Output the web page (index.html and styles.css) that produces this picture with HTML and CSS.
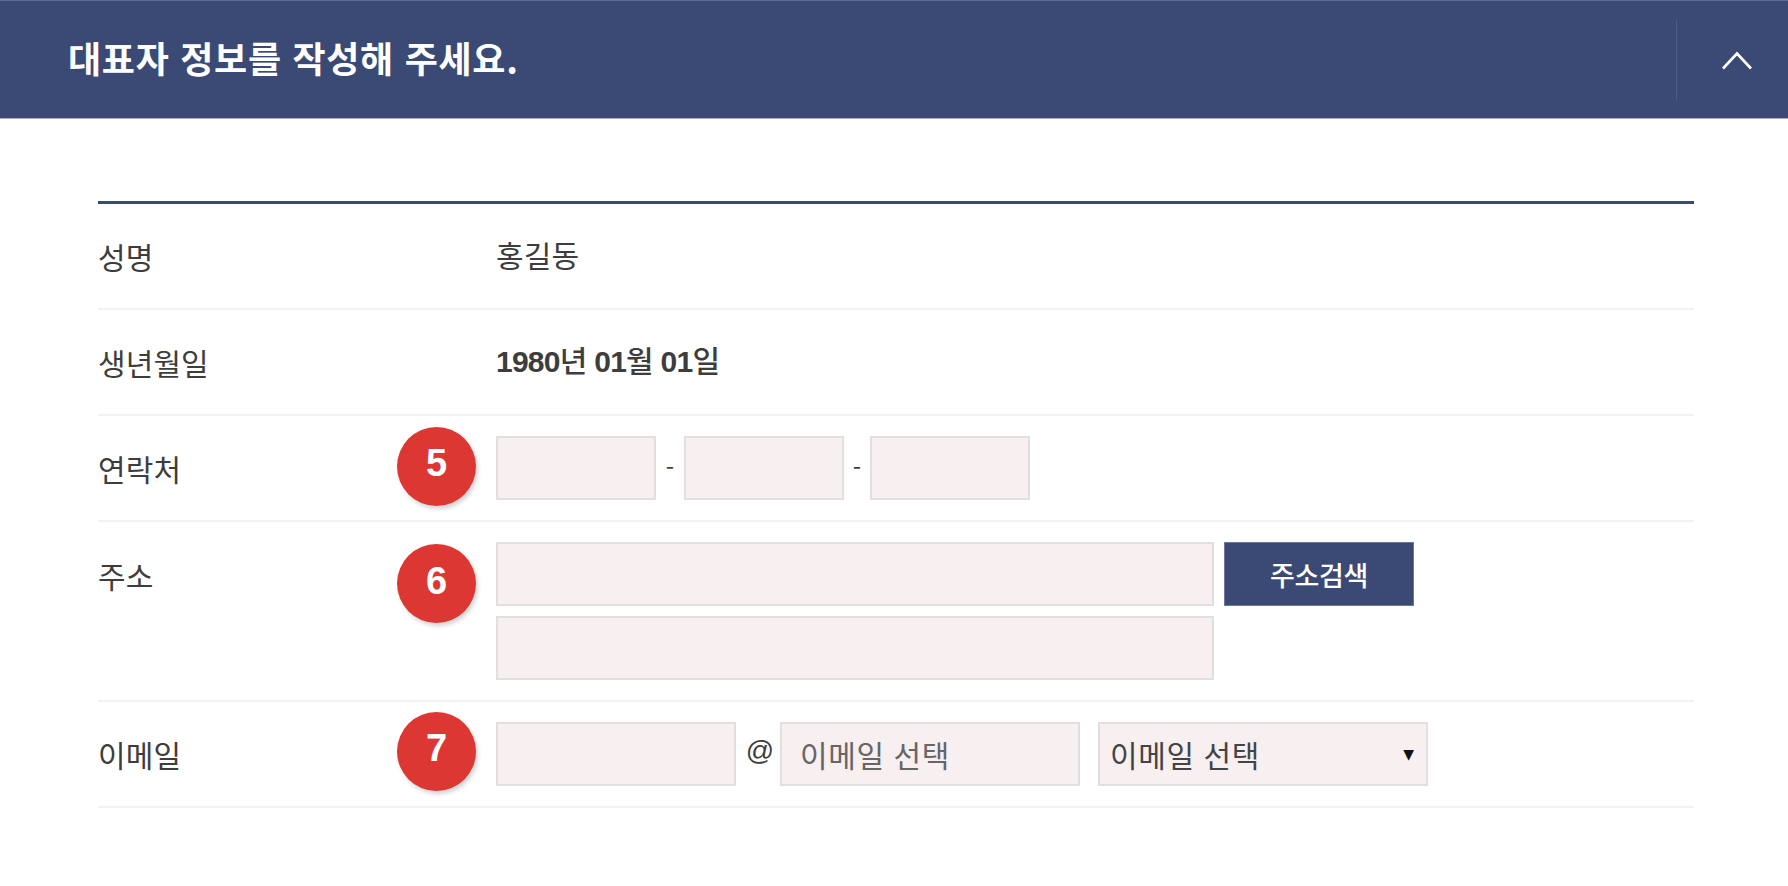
FILE: index.html
```html
<!DOCTYPE html>
<html lang="ko">
<head>
<meta charset="utf-8">
<title>대표자 정보</title>
<link rel="stylesheet" href="styles.css">
</head>
<body>
<header class="head">
  <h1 class="head-title">대표자 정보를 작성해 주세요.</h1>
  <button class="head-toggle" type="button" aria-label="접기">
    <svg class="chevron" width="30" height="20" viewBox="0 0 30 20"><path d="M1 18.5 L15 3.5 L29 18.5" fill="none" stroke="#fff" stroke-width="2.6"/></svg>
  </button>
</header>
<main class="panel">
  <div class="table">
    <div class="row">
      <div class="label">성명</div>
      <div class="slot"></div>
      <div class="value name">홍길동</div>
    </div>
    <div class="row">
      <div class="label">생년월일</div>
      <div class="slot"></div>
      <div class="value birth">1980<span class="unit">년</span> 01<span class="unit">월</span> 01<span class="unit">일</span></div>
    </div>
    <div class="row form">
      <div class="label">연락처</div>
      <div class="slot"><span class="badge">5</span></div>
      <div class="field">
        <div class="line">
          <input class="box w-phone" type="text">
          <span class="dash first">-</span>
          <input class="box w-phone" type="text">
          <span class="dash">-</span>
          <input class="box w-phone" type="text">
        </div>
      </div>
    </div>
    <div class="row form addr">
      <div class="label up">주소</div>
      <div class="slot"><span class="badge">6</span></div>
      <div class="field stack">
        <div class="line">
          <input class="box w-addr" type="text">
          <button class="search" type="button">주소검색</button>
        </div>
        <div class="line">
          <input class="box w-addr" type="text">
        </div>
      </div>
    </div>
    <div class="row form mail">
      <div class="label">이메일</div>
      <div class="slot"><span class="badge">7</span></div>
      <div class="field">
        <div class="line">
          <input class="box w-mail" type="text">
          <span class="at">@</span>
          <input class="box w-domain" type="text" placeholder="이메일 선택">
          <div class="box select">
            <span>이메일 선택</span>
            <span class="caret">▼</span>
          </div>
        </div>
      </div>
    </div>
  </div>
</main>
</body>
</html>
```
FILE: styles.css
```css
* { box-sizing: border-box; }
html, body { margin: 0; padding: 0; background: #fff; }
body {
  font-family: "Noto Sans CJK KR", "Noto Sans", sans-serif;
  color: #3d3d3d;
  overflow: hidden;
}
.head {
  height: 119px;
  background: #3a4a75;
  border-top: 1px solid #5d6b90;
  border-bottom: 1px solid #a6aec2;
  display: flex;
  align-items: center;
  justify-content: space-between;
}
.head-title {
  margin: -6px 0 0 68px;
  font-size: 36px;
  font-weight: 700;
  color: #fff;
  letter-spacing: 0.7px;
}
.head-toggle {
  width: 112px;
  height: 80px;
  padding: 0 0 0 9px;
  background: none;
  border: 0;
  border-left: 1px solid #4f5d85;
  display: flex;
  align-items: center;
  justify-content: center;
}
.panel { padding: 82px 94px 0 98px; }
.table { border-top: 3px solid #3a4a75; }
.row {
  display: flex;
  align-items: center;
  height: 106px;
  border-bottom: 2px solid #f2f2f2;
}
.row.addr { height: 180px; align-items: flex-start; }
.label {
  width: 299px;
  font-size: 30px;
  letter-spacing: 0.1px;
  line-height: 40px;
}
.label.up { margin-top: 33px; }
.slot { width: 99px; display: flex; }
.form .slot { margin-top: -4px; }
.addr .slot { margin-top: 22px; }
.mail .slot { margin-top: -6px; }
.value { font-size: 30px; line-height: 40px; }
.value.name { margin-top: -4px; letter-spacing: 0.1px; }
.value.birth {
  font-family: "Liberation Sans", "Noto Sans CJK KR", sans-serif;
  font-weight: 700;
  margin-top: -4px;
  letter-spacing: -0.75px;
}
.unit { font-family: "Noto Sans CJK KR", sans-serif; font-weight: 500; }
.badge {
  width: 79px;
  height: 79px;
  padding-bottom: 5px;
  border-radius: 50%;
  background: #dc3733;
  color: #fff;
  font-family: "Liberation Sans", sans-serif;
  font-weight: 700;
  font-size: 38px;
  display: flex;
  align-items: center;
  justify-content: center;
  box-shadow: 2px 3px 4px rgba(0,0,0,0.18);
}
.line { display: flex; align-items: center; }
.stack { padding-top: 20px; display: flex; flex-direction: column; gap: 10px; }
.box {
  height: 64px;
  margin: 0;
  padding: 0 18px;
  background: #f8eff0;
  border: 2px solid #e1dfdf;
  border-radius: 0;
  font-family: inherit;
  font-size: 30px;
  color: #444;
}
.box::placeholder { color: #666; opacity: 1; letter-spacing: 0.6px; }
.w-phone { width: 160px; }
.w-addr { width: 718px; }
.w-mail { width: 240px; }
.w-domain { width: 300px; }
.dash { width: 26px; text-align: center; font-size: 24px; margin-top: -4px; }
.dash.first { width: 28px; }
.at {
  width: 44px;
  padding-left: 4px;
  text-align: center;
  font-family: "Liberation Sans", sans-serif;
  font-size: 28px;
  margin-top: -6px;
}
.select {
  width: 330px;
  margin-left: 18px;
  padding: 0 12px 0 10px;
  display: flex;
  align-items: center;
  justify-content: space-between;
  letter-spacing: 0.6px;
}
.caret { font-family: "DejaVu Sans", sans-serif; font-size: 14px; color: #111; letter-spacing: 0; }
.search {
  width: 190px;
  height: 64px;
  margin-left: 10px;
  padding: 0;
  background: #3a4a75;
  border: 1px solid #6b789b;
  color: #fff;
  font-family: inherit;
  font-size: 27px;
  font-weight: 500;
  letter-spacing: -0.4px;
}
```
